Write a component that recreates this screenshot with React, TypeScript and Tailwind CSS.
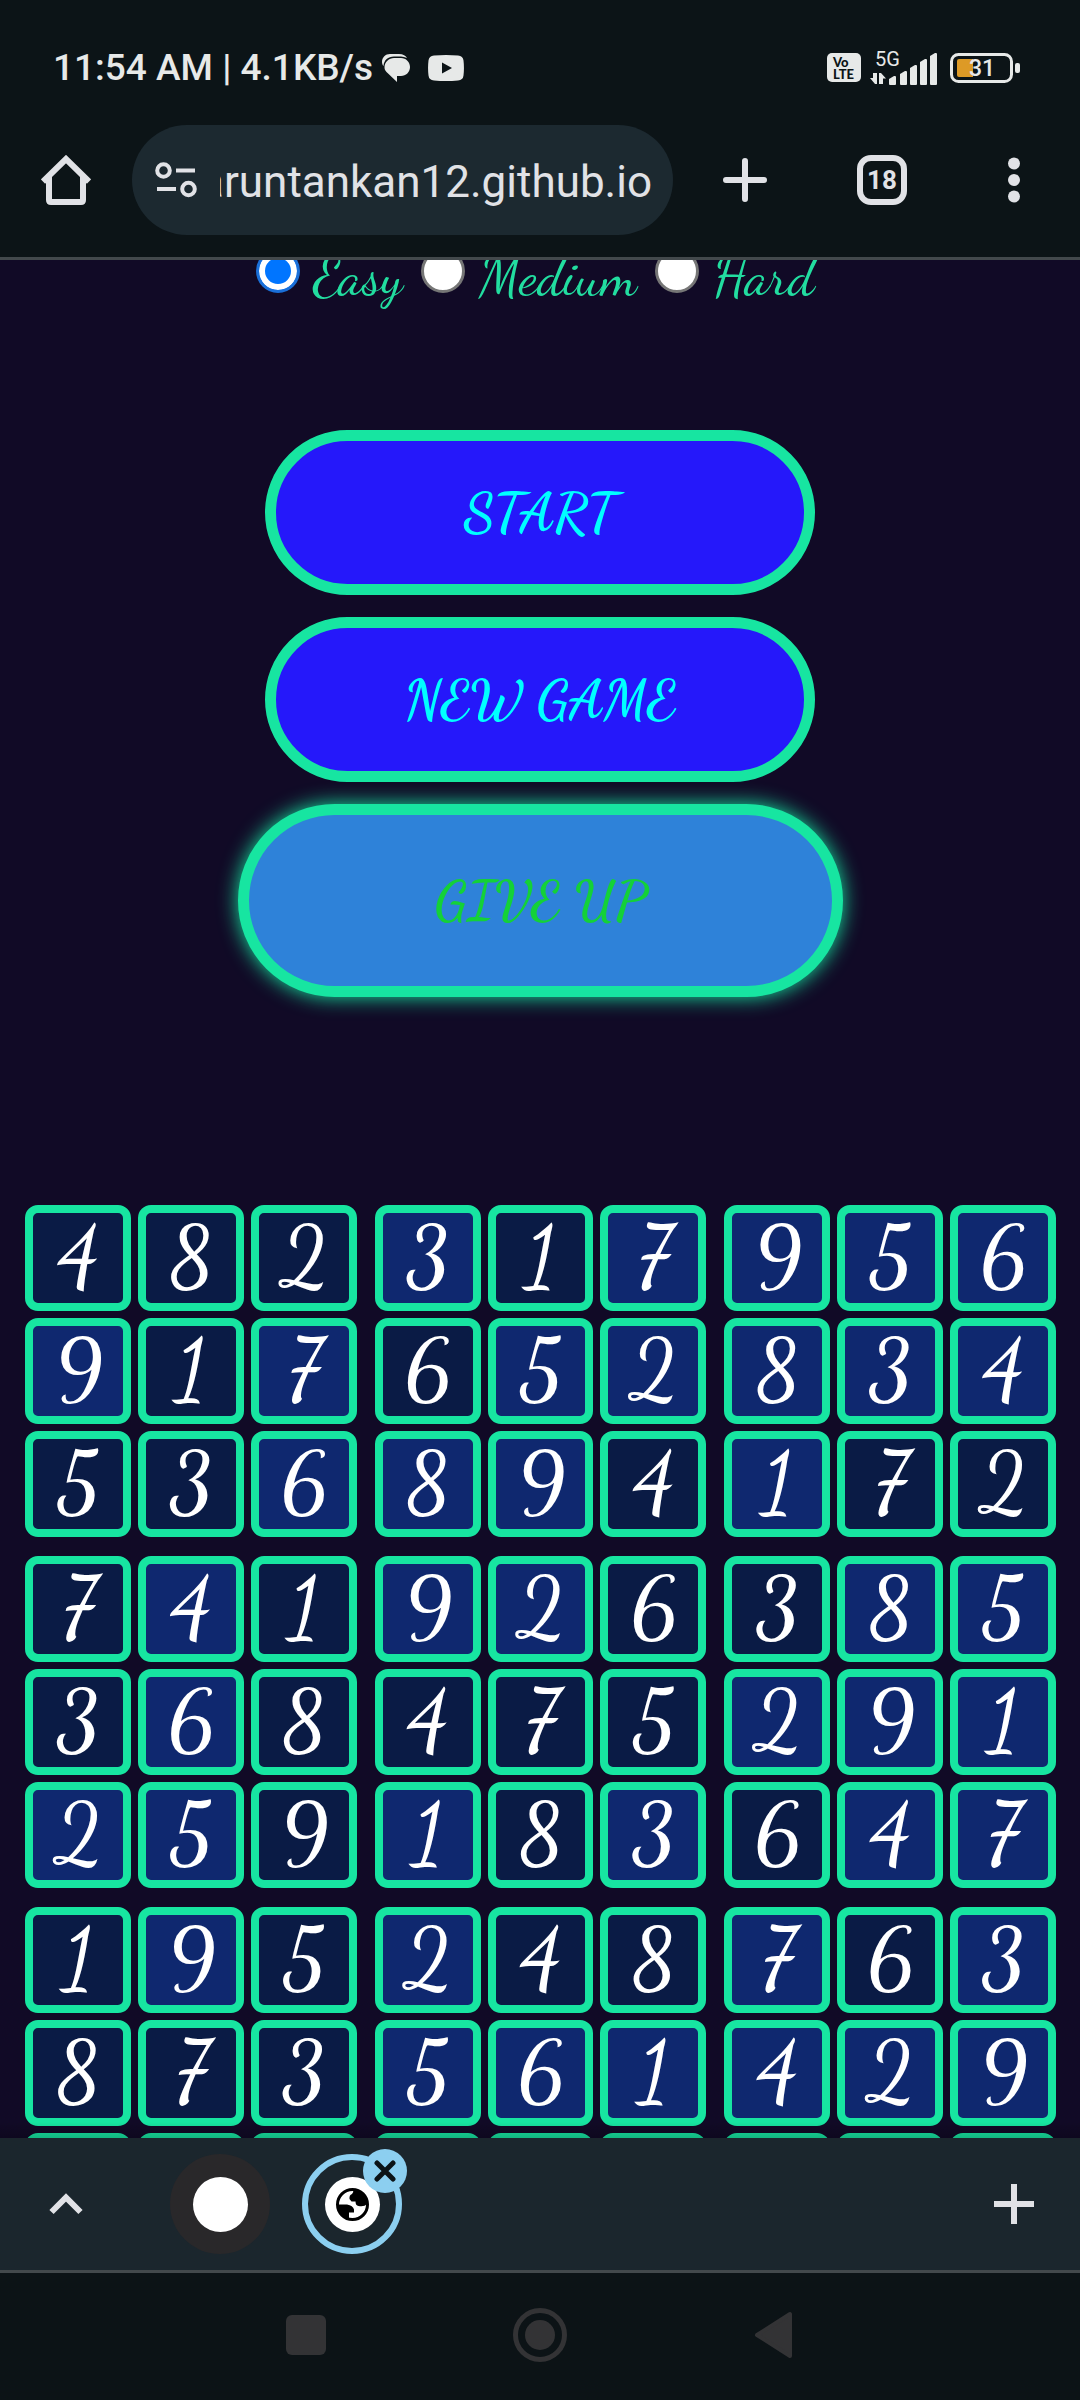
import { useState, type ReactNode } from "react";

const LEVELS = ["Easy", "Medium", "Hard"];

// "*" after a digit marks a cell that gets the brighter fill
const BOARD = [
  "4 8 2 3* 1 7* 9* 5* 6*",
  "9* 1 7* 6 5* 2* 8* 3* 4*",
  "5 3 6* 8* 9* 4 1* 7 2",
  "7 4* 1 9* 2* 6 3 8* 5*",
  "3 6* 8 4 7 5 2* 9* 1*",
  "2* 5* 9 1* 8 3* 6 4* 7*",
  "1 9* 5 2* 4 8 7* 6 3*",
  "8 7 3 5* 6* 1* 4* 2* 9*",
  "6 2 4 7 3 9 5 1 8",
].map((row) => row.split(" "));

const THIRDS = [0, 1, 2];

function StatusBar() {
  return (
    <div className="flex items-center pl-[53px] pr-[60px] pt-[46px] h-[89px] text-[#e7e9e8]">
      <span className="text-[37px] leading-[44px] font-medium whitespace-nowrap">11:54 AM | 4.1KB/s</span>
      <svg className="ml-[9px] shrink-0" width="28" height="28" viewBox="0 0 28 28" fill="currentColor">
        <path d="M8 0h9c4 0 7 2 8 4-2-1-4-1.500-6-1.500h-7C6 2.500 2 6 1.500 12 .5 11 0 9.500 0 8c0-4.500 3.500-8 8-8z" />
        <path d="M12 4h7c5 0 9 4 9 9s-4 9-9 9h-4v6L4.500 18C3 16.500 2.500 15 2.500 13c0-5 4.500-9 9.500-9z" />
      </svg>
      <svg className="ml-[18px] shrink-0" width="36" height="26" viewBox="0 0 36 26">
        <path d="M6 .6Q18-.6 30 .6q5 .4 5.500 5 .9 7.400 0 14.800-.5 4.600-5.500 5-12 1.200-24 0-5-.4-5.500-5-.9-7.400 0-14.800Q1 1 6 .6z" fill="currentColor" />
        <path d="M14 7.500v11l10-5.500z" fill="#0c1417" />
      </svg>

      <div className="ml-auto flex items-center">
        <div className="w-[34px] h-[29px] rounded-[5px] bg-[#e7e9e8] text-[#0c1417] text-[13px] leading-[12px] font-black pl-[6px] pt-[3px] font-['Lato',sans-serif]">
          <div>Vo</div>
          <div>LTE</div>
        </div>
        <div className="relative ml-[9px]">
          <span className="absolute left-[5px] -top-[4px] text-[20px] leading-[24px]">5G</span>
          <svg width="68" height="34" viewBox="0 0 68 34" fill="currentColor">
            <path d="M0 27h3v-5h4v11H5zM9 22h2l5 5.500h-3V33H9z" />
            <path d="M19 28l5-3q2-.5 2 1v7q0 1-1 1h-5q-1 0-1-1z" />
            <path d="M30 23l5-3q2-.5 2 1v12q0 1-1 1h-5q-1 0-1-1z" />
            <path d="M40 17l5-3q2-.5 2 1v18q0 1-1 1h-5q-1 0-1-1z" />
            <path d="M50 11l5-3q2-.5 2 1v24q0 1-1 1h-5q-1 0-1-1z" />
            <path d="M60 5l5-3q2-.5 2 1v30q0 1-1 1h-5q-1 0-1-1z" />
          </svg>
        </div>
        <div className="relative ml-3 flex items-center">
          <svg width="70" height="30" viewBox="0 0 70 30">
            <rect x="1.500" y="1.500" width="60" height="27" rx="7" fill="none" stroke="currentColor" strokeWidth="3" />
            <path d="M9 6h14v18H9q-2 0-2-2V8q0-2 2-2z" fill="#dd9a26" />
            <rect x="65" y="10" width="5" height="10" rx="2" fill="currentColor" />
          </svg>
          <span className="absolute left-[19px] top-[3px] text-[23px] leading-[26px] font-medium">31</span>
        </div>
      </div>
    </div>
  );
}

function Toolbar() {
  return (
    <div className="mt-9 mb-[22px] flex items-center pl-[41px] pr-[49px] text-[#e1e2e6]">
      <button aria-label="Home">
        <svg width="50" height="50" viewBox="0 0 50 50" fill="none" stroke="currentColor" strokeWidth="6">
          <path d="M2 26.500L25 4l23 22.500" />
          <path d="M8 22v23q0 2 2 2h30q2 0 2-2V22" />
        </svg>
      </button>
      <div className="ml-[41px] flex h-[110px] min-w-0 flex-1 items-center rounded-full bg-[#1c2930] pl-[23px] pr-[21px]">
        <svg className="shrink-0" width="42" height="36" viewBox="0 0 42 36" fill="none" stroke="currentColor" strokeWidth="4">
          <circle cx="8.500" cy="8.500" r="6.300" />
          <path d="M21 8.500h19M2 27h19" />
          <circle cx="33.500" cy="27" r="6.300" />
        </svg>
        <input
          aria-label="Address"
          className="ml-[23px] min-w-0 flex-1 bg-transparent pt-[3px] text-[44px] leading-[60px] outline-none"
          defaultValue="aruntankan12.github.io"
          ref={(el) => {
            if (el) el.scrollLeft = el.scrollWidth;
          }}
        />
      </div>
      <div className="ml-[50px] flex items-center gap-[90px]">
        <button aria-label="New tab">
          <svg width="44" height="44" viewBox="0 0 44 44" stroke="currentColor" strokeWidth="6" strokeLinecap="round">
            <path d="M22 3v38M3 22h38" />
          </svg>
        </button>
        <button className="h-[50px] w-[50px] rounded-[14px] border-6 border-[#e1e2e6] text-[26px] leading-[38px] font-bold">
          18
        </button>
        <button aria-label="Menu">
          <svg width="34" height="46" viewBox="0 0 34 46" fill="currentColor">
            <circle cx="17" cy="6.500" r="6" />
            <circle cx="17" cy="23" r="6" />
            <circle cx="17" cy="39.500" r="6" />
          </svg>
        </button>
      </div>
    </div>
  );
}

function GameButton({ children }: { children: ReactNode }) {
  return (
    <button className="h-[165px] w-[550px] rounded-full border-11 border-[#17e5a1] bg-[#2518fa] text-[55px] font-bold text-[#00ffff]">
      {children}
    </button>
  );
}

function Block({ row, col }: { row: number; col: number }) {
  const cells = THIRDS.flatMap((r) => BOARD[row * 3 + r].slice(col * 3, col * 3 + 3));
  return (
    <div className="grid grid-cols-3 gap-[7px]">
      {cells.map((cell, i) => (
        <div
          key={i}
          className={`flex aspect-square items-center justify-center rounded-[13px] border-8 border-[#17e5a1] text-[84px] leading-[90px] font-medium text-white ${
            cell.endsWith("*") ? "bg-[#0f286f]" : "bg-[#0a1b45]"
          }`}
        >
          {cell[0]}
        </div>
      ))}
    </div>
  );
}

function Game() {
  const [level, setLevel] = useState("Easy");
  return (
    <main className="relative min-h-0 flex-1 overflow-hidden bg-[#110a26] font-['Dancing_Script','Liberation_Serif',serif]">
      <div className="-mt-[11px] flex items-start justify-center gap-[18px] pr-[10px]">
        {LEVELS.map((name) => (
          <label key={name} className="flex items-start gap-[14px] text-[55px] leading-[54px] text-[#22dda0]">
            <input
              type="radio"
              name="level"
              checked={level === name}
              onChange={() => setLevel(name)}
              className="h-11 w-11 appearance-none rounded-full border-3 border-[#767676] bg-white checked:border-[#1a6fd8] checked:bg-[#0075ff] checked:shadow-[inset_0_0_0_6px_#fff]"
            />
            {name}
          </label>
        ))}
      </div>

      <div className="mt-[127px] flex flex-col items-center gap-[22px]">
        <GameButton>START</GameButton>
        <GameButton>NEW GAME</GameButton>
        <button className="h-[193px] w-[605px] rounded-full border-11 border-[#17e5a1] bg-[#2e82d9] text-[55px] font-bold text-[#14d138] shadow-[0_0_20px_#17e5a1]">
          GIVE UP
        </button>
      </div>

      <div className="mt-[208px] grid grid-cols-3 gap-x-[18px] gap-y-[19px] pl-[25px] pr-6">
        {THIRDS.map((row) => THIRDS.map((col) => <Block key={`${row}${col}`} row={row} col={col} />))}
      </div>

      {/* Shade cast by the tab strip */}
      <div className="pointer-events-none absolute inset-x-0 bottom-0 h-4 bg-linear-to-t from-black/20 to-transparent" />
    </main>
  );
}

function TabStrip() {
  return (
    <div className="flex h-[135px] items-center border-b-3 border-[#43494c] bg-[#1b262d] pl-[49px] pr-[46px] text-[#e1e2e6]">
      <button aria-label="Show tabs">
        <svg width="34" height="22" viewBox="0 0 34 22" fill="none" stroke="currentColor" strokeWidth="6">
          <path d="M2.500 19L17 4.500 31.500 19" />
        </svg>
      </button>
      <button aria-label="Other tab" className="ml-[87px] flex h-[100px] w-[100px] items-center justify-center rounded-full bg-[#29282a]">
        <span className="h-[55px] w-[55px] rounded-full bg-white" />
      </button>
      <div className="relative ml-8">
        <button aria-label="Current tab" className="flex h-[100px] w-[100px] items-center justify-center rounded-full border-6 border-[#8ccff0]">
          <span className="flex h-[55px] w-[55px] items-center justify-center rounded-full bg-white">
            <svg width="33" height="33" viewBox="0 0 33 33">
              <circle cx="16.500" cy="16.500" r="15" fill="#fff" stroke="#000" strokeWidth="3" />
              <path d="M17 2q1 2-1 4-3 1-2.500 5l2 2.500h4q0 4 3 4.500 6 1 8.500-2A14.500 14.500 0 0 0 17 2z" />
              <path d="M2 16.500h9q6 1 7 5v3h-5v6A14.500 14.500 0 0 1 2 16.500z" />
            </svg>
          </span>
        </button>
        <button aria-label="Close tab" className="absolute -right-[5px] -top-[5px] flex h-11 w-11 items-center justify-center rounded-full bg-[#8ccff0]">
          <svg width="22" height="22" viewBox="0 0 22 22" stroke="#0c1417" strokeWidth="5" strokeLinecap="round">
            <path d="M3 3l16 16M19 3L3 19" />
          </svg>
        </button>
      </div>
      <button aria-label="Add tab" className="ml-auto">
        <svg width="40" height="40" viewBox="0 0 40 40" stroke="currentColor" strokeWidth="6">
          <path d="M20 0v40M0 20h40" />
        </svg>
      </button>
    </div>
  );
}

function NavBar() {
  return (
    <nav className="flex h-[127px] items-center justify-center gap-[180px] bg-[#0c1316] pb-1 text-[#333335]">
      <button aria-label="Recents">
        <svg width="54" height="54" viewBox="0 0 54 54" fill="currentColor">
          <rect x="7" y="7" width="40" height="40" rx="6" />
        </svg>
      </button>
      <button aria-label="Home screen">
        <svg width="54" height="54" viewBox="0 0 54 54">
          <circle cx="27" cy="27" r="24.500" fill="none" stroke="currentColor" strokeWidth="5" />
          <circle cx="27" cy="27" r="15" fill="currentColor" />
        </svg>
      </button>
      <button aria-label="Back">
        <svg width="54" height="54" viewBox="0 0 54 54" fill="currentColor" stroke="currentColor" strokeWidth="4" strokeLinejoin="round">
          <path d="M43 6v42L10 27z" />
        </svg>
      </button>
    </nav>
  );
}

export default function App() {
  return (
    <div className="flex h-screen flex-col font-['Roboto',sans-serif]">
      <header className="border-b-3 border-[#43494c] bg-[#0c1417]">
        <StatusBar />
        <Toolbar />
      </header>
      <Game />
      <TabStrip />
      <NavBar />
    </div>
  );
}
